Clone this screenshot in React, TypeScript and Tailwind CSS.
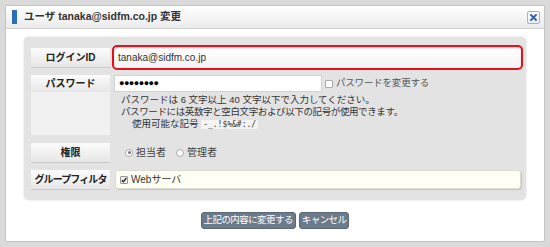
import React from "react";

const jp = { fontFamily: '"Liberation Sans", "Noto Sans CJK JP", sans-serif' };

function Label({ children, tight }: { children: React.ReactNode; tight?: boolean }) {
  return (
    <div
      className={`w-[79px] h-[19px] flex items-center justify-center bg-gradient-to-b from-[#fcfcfc] to-[#e6e6e6] shadow-[0_1px_0_#c9c9c9] text-[10px] font-bold text-[#222] ${tight ? "tracking-[-0.09em]" : ""}`}
    >
      {children}
    </div>
  );
}

export default function App() {
  return (
    <div className="w-[550px] h-[247px] bg-[#dadada] p-[5px]" style={jp}>
      <div className="h-full bg-white border border-[#c4c4c4] rounded-[2px] flex flex-col">
        <div className="h-[23px] flex items-center bg-gradient-to-b from-white to-[#ebebeb] border-b border-[#cfcfcf] pl-[6px] pr-[4px]">
          <div className="w-[5px] h-[14px] bg-[#2c6fb7]" />
          <div className="ml-[7px] text-[10.5px] font-bold text-[#333]">ユーザ tanaka@sidfm.co.jp 変更</div>
          <div className="ml-auto w-[13px] h-[13px] border border-[#9fb3cf] rounded-[2px] bg-gradient-to-b from-white to-[#e4ebf4] flex items-center justify-center">
            <svg width="7" height="7" viewBox="0 0 7 7">
              <path d="M1 1L6 6M6 1L1 6" stroke="#2f5fa6" strokeWidth="1.8" strokeLinecap="round" />
            </svg>
          </div>
        </div>
        <div className="px-[18px] pt-[8px]">
          <div className="bg-[#e3e3e3] rounded-[5px] pt-[8px] pb-[11px] pl-[7px] pr-[3px] shadow-[0_0_2px_#d0d0d0]">
            <div className="flex items-center h-[25px]">
              <Label>ログインID</Label>
              <div className="ml-[2px] flex-1 h-[25px] border-2 border-[#e4111b] rounded-[5px] bg-gradient-to-b from-white to-[#f4f4f4] shadow-[inset_0_1px_2px_#ccc] flex items-center pl-[4px] text-[10px] text-[#333]">
                tanaka@sidfm.co.jp
              </div>
            </div>
            <div className="flex mt-[5px]">
              <div className="w-[79px] h-[60px] bg-[#f1f1f1] flex flex-col">
                <div className="h-[17px] flex items-center justify-center bg-gradient-to-b from-[#fcfcfc] to-[#e6e6e6] text-[10px] font-bold text-[#222]">
                  パスワード
                </div>
              </div>
              <div className="ml-[2px] flex-1">
                <div className="flex items-center">
                  <div className="ml-[2px] w-[208px] h-[17px] bg-white border border-[#d2d2d2] flex items-center pl-[4px] text-[9px] text-black tracking-[-0.5px] font-bold">
                    ●●●●●●●●
                  </div>
                  <div className="ml-[3px] w-[8px] h-[8px] border border-[#aaa] bg-white rounded-[1px]" />
                  <div className="ml-[3px] text-[9.5px] text-[#555] tracking-[-0.02em]">パスワードを変更する</div>
                </div>
                <div className="pl-[9px] pt-[2px] text-[9.5px] leading-[12px] text-[#333]">
                  <div>パスワードは 6 文字以上 40 文字以下で入力してください。</div>
                  <div className="tracking-[-0.04em]">パスワードには英数字と空白文字および以下の記号が使用できます。</div>
                  <div className="pl-[11px]">
                    使用可能な記号{" "}
                    <span className="bg-[#f4f4f4] px-[2px] text-[8px]" style={{ fontFamily: '"DejaVu Sans Mono", monospace' }}>
                      -_.!$%&#:./
                    </span>
                  </div>
                </div>
              </div>
            </div>
            <div className="flex items-center mt-[8px]">
              <Label>権限</Label>
              <div className="ml-[15px] flex items-center text-[10px] text-[#444]">
                <div className="w-[8px] h-[8px] rounded-full border border-[#aaa] bg-white flex items-center justify-center">
                  <div className="w-[3px] h-[3px] rounded-full bg-[#777]" />
                </div>
                <span className="ml-[3px]">担当者</span>
                <div className="ml-[10px] w-[8px] h-[8px] rounded-full border border-[#aaa] bg-white" />
                <span className="ml-[3px]">管理者</span>
              </div>
            </div>
            <div className="flex items-center mt-[8px]">
              <Label tight>グループフィルタ</Label>
              <div className="ml-[5px] mr-[2px] flex-1 h-[19px] bg-[#fffff3] border border-[#dcdcd0] rounded-[3px] shadow-[1px_1px_1px_#c4c4c4] flex items-center pl-[4px] text-[10px] text-[#333]">
                <div className="w-[8px] h-[8px] border border-[#999] bg-[#eee] rounded-[1px] flex items-center justify-center">
                  <svg width="6" height="6" viewBox="0 0 6 6">
                    <path d="M0.8 3.2L2.4 4.8L5.3 1" stroke="#222" strokeWidth="1.3" fill="none" />
                  </svg>
                </div>
                <span className="ml-[3px]">Webサーバ</span>
              </div>
            </div>
          </div>
          <div className="flex justify-center gap-[3px] mt-[12px]">
            <div className="h-[17px] px-[2px] flex items-center bg-[#6c7b8b] border border-[#5b6878] rounded-[3px] text-[9.5px] text-white tracking-[-0.06em]">
              上記の内容に変更する
            </div>
            <div className="h-[17px] px-[2px] flex items-center bg-[#6c7b8b] border border-[#5b6878] rounded-[3px] text-[9.5px] text-white tracking-[-0.06em]">
              キャンセル
            </div>
          </div>
        </div>
      </div>
    </div>
  );
}
